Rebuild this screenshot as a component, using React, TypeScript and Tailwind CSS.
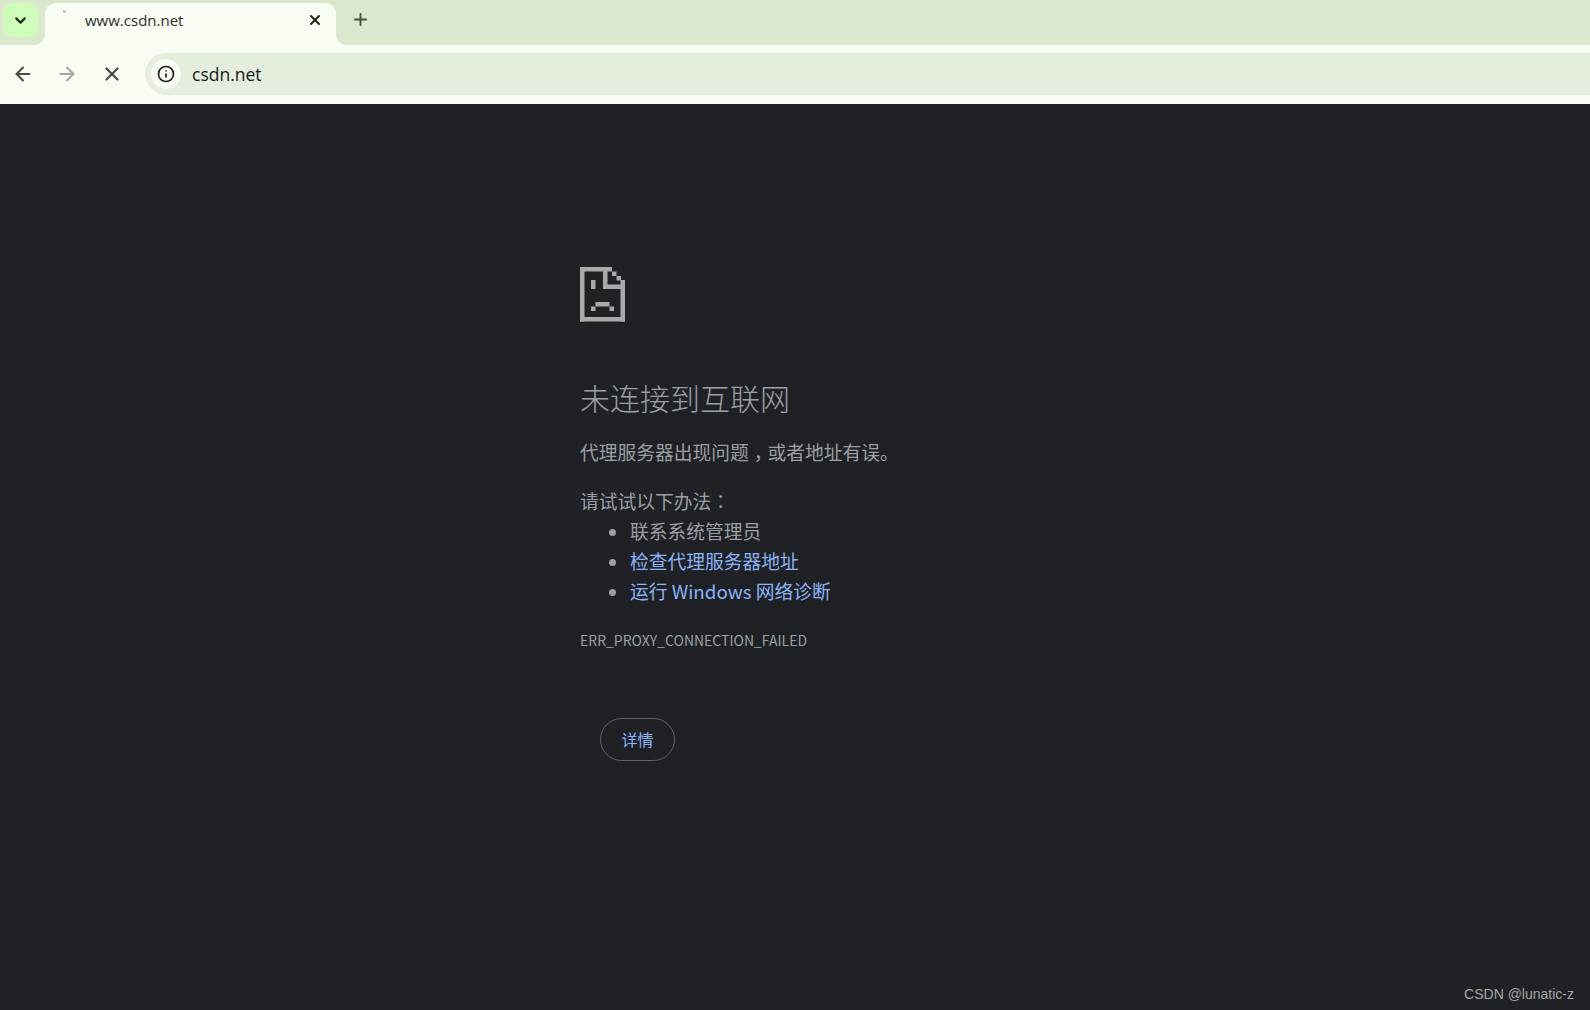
import { ArrowLeft, ArrowRight, ChevronDown, Info, Plus, X } from "lucide-react";

const cjk = "font-['Noto_Sans_CJK_SC','Liberation_Sans',sans-serif]";

function SadFile() {
  // pixel art, coordinates read off the reference
  const rects = [
    [0, 0, 32, 4.5],
    [0, 0, 4.5, 54.5],
    [0, 50, 45, 4.5],
    [40.5, 13, 4.5, 41.5],
    [23, 4, 4.5, 18],
    [23, 17.5, 22, 4.5],
    [32, 4.5, 4.5, 4.5],
    [36.5, 9, 4.5, 4.5],
    [11, 13, 4.5, 9],
    [15.5, 35, 14, 4.5],
    [11, 39.5, 4.5, 4.5],
    [29.5, 39.5, 4.5, 4.5],
  ];
  return (
    <svg width="45" height="55" viewBox="0 0 45 55" fill="#a9a9a9" className="block">
      {rects.map(([x, y, w, h], i) => (
        <rect key={i} x={x} y={y} width={w} height={h} />
      ))}
    </svg>
  );
}

function TabStrip() {
  return (
    <div className="flex h-[45px] items-start bg-[#dae9cd] pl-[3px]">
      <div className="mt-[3px] flex h-[34px] w-[35px] items-center justify-center rounded-[10px] bg-[#cdfdb8]">
        <ChevronDown size={17} strokeWidth={3} className="text-[#1f2a1c]" />
      </div>
      <div className="relative ml-[7px] mt-[3px] flex h-[42px] w-[291px] items-center rounded-t-[11px] bg-[#f8fcf3] pb-[8px] pl-[40px] pr-[13px]">
        <span className="absolute bottom-0 left-[-11px] h-[11px] w-[11px] bg-[radial-gradient(circle_at_0_0,#dae9cd_10.5px,#f8fcf3_11.5px)]" />
        <span className="absolute bottom-0 right-[-11px] h-[11px] w-[11px] bg-[radial-gradient(circle_at_100%_0,#dae9cd_10.5px,#f8fcf3_11.5px)]" />
        <span className="absolute left-[18px] top-[7px] h-[3px] w-[3px] bg-[#c9cec5]" />
        <span className="flex-1 font-['Open_Sans','Liberation_Sans',sans-serif] text-[15px] text-[#2a2f28]">
          www.csdn.net
        </span>
        <X size={16} strokeWidth={3} className="text-[#1f2a1c]" />
      </div>
      <Plus size={19} strokeWidth={2.4} className="ml-[15px] mt-[10px] text-[#45503f]" />
    </div>
  );
}

function Toolbar() {
  return (
    <div className="flex h-[59px] items-center bg-[#f8fcf3] pb-[1px] pl-[12px]">
      <ArrowLeft size={22} strokeWidth={2.2} className="text-[#45503f]" />
      <ArrowRight size={22} strokeWidth={2.2} className="ml-[22px] text-[#a3a8a0]" />
      <X size={22} strokeWidth={2.4} className="ml-[23px] text-[#45503f]" />
      <div className="ml-[22px] flex h-[42px] flex-1 items-center rounded-l-full bg-[#e5eedc] pl-[6px]">
        <div className="flex h-[30px] w-[30px] items-center justify-center rounded-full bg-[#f8fcf3]">
          <Info size={18} strokeWidth={2.2} className="text-[#1b1f19]" />
        </div>
        <span className="ml-[11px] font-['Open_Sans','Liberation_Sans',sans-serif] text-[17.5px] text-[#14181c]">
          csdn.net
        </span>
      </div>
    </div>
  );
}

export default function App() {
  return (
    <div className="relative flex h-[1010px] w-[1590px] flex-col overflow-hidden bg-[#202124]">
      <TabStrip />
      <Toolbar />
      <main className={`flex-1 pl-[580px] pt-[163px] ${cjk} text-[#9aa0a6]`}>
        <SadFile />
        <h1 className="mt-[55px] text-[30px] font-light leading-[40px]">未连接到互联网</h1>
        <p className="mt-[20px] text-[18.75px] leading-[30px]">
          代理服务器出现问题<span className="ml-[5px] tracking-[-5px]">，</span>或者地址有误。
        </p>
        <p className="mt-[19px] text-[18.75px] leading-[30px]">
          请试试以下办法<span className="font-['Noto_Sans_CJK_TC',sans-serif]">：</span>
        </p>
        <ul className="list-disc pl-[50px] text-[18.75px] leading-[30px] marker:text-[#9aa0a6]">
          <li>联系系统管理员</li>
          <li className="text-[#8ab4f8] marker:text-[#9aa0a6]">检查代理服务器地址</li>
          <li className="text-[#8ab4f8] marker:text-[#9aa0a6]">运行 Windows 网络诊断</li>
        </ul>
        <div className="mt-[24px] text-[14px] leading-[20px]">ERR_PROXY_CONNECTION_FAILED</div>
        <button className="ml-[20px] mt-[68px] flex h-[43px] w-[75px] items-center justify-center rounded-full border border-[#5f6368] pb-[2px] text-[16px] text-[#8ab4f8]">
          详情
        </button>
      </main>
      <span className="absolute bottom-[5px] right-[16px] font-['Liberation_Sans',sans-serif] text-[14px] text-[#a6a6a6]">
        CSDN @lunatic-z
      </span>
    </div>
  );
}
